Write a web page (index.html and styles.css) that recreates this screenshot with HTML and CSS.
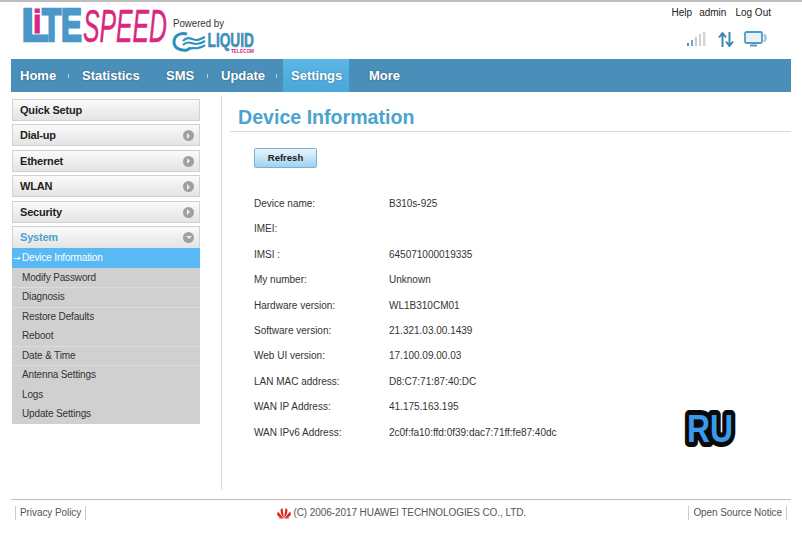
FILE: index.html
```html
<!DOCTYPE html>
<html lang="en">
<head>
<meta charset="utf-8">
<title>Device Information</title>
<link rel="stylesheet" href="styles.css">
</head>
<body>
<div class="page">
  <header class="header">
    <svg class="logo" width="245" height="55" viewBox="15 2 245 55">
      <text class="lg-blue" x="21.500" y="40.500" font-size="47" textLength="27" lengthAdjust="spacingAndGlyphs">L</text>
      <text class="lg-pink" x="33" y="33" font-size="33" textLength="8.500" lengthAdjust="spacingAndGlyphs">i</text>
      <text class="lg-blue" x="42" y="40.500" font-size="47" textLength="40" lengthAdjust="spacingAndGlyphs">TE</text>
      <text class="lg-speed" x="83" y="41.500" font-size="47" textLength="84" lengthAdjust="spacingAndGlyphs">SPEED</text>
      <text class="lg-by" x="173" y="26.500" font-size="10.500" textLength="51" lengthAdjust="spacingAndGlyphs">Powered by</text>
      <path class="lg-c" d="M187 34c-7-2-13 2-13 8s6 9 13 8l3-2"/>
      <path class="lg-w" d="M183 41c5-6 9-1 13-1s6-2 9-3M183 45c5-5 9-1 13-1s6-1 9-3M189 49c3-2 6 0 9-1s5-1 7-3"/>
      <text class="lg-liquid" x="207.500" y="47" font-size="21" textLength="46.500" lengthAdjust="spacingAndGlyphs">LIQUID</text>
      <text class="lg-tel" x="231" y="53" font-size="5.500" textLength="23" lengthAdjust="spacingAndGlyphs">TELECOM</text>
    </svg>
    <div class="top-right">
      <div class="links"><span>Help</span><span>admin</span><span>Log Out</span></div>
      <div class="status">
        <svg width="21" height="16" viewBox="0 0 21 16"><rect x="0" y="12" width="2" height="3" fill="#4a90b8"/><rect x="4" y="9" width="2" height="6" fill="#6fa6c6"/><rect x="8" y="6" width="2" height="9" fill="#c9c9c9"/><rect x="12" y="3" width="2" height="12" fill="#cfcfcf"/><rect x="16" y="1" width="2.500" height="14" fill="#d6d6d6"/></svg>
        <svg width="16" height="15" viewBox="0 0 16 15"><path d="M4.500 15V2M1 5.500 4.500 1 8 5.500M11.500 0v13M8 9.500l3.500 4.500 3.500-4.500" fill="none" stroke="#3f87b3" stroke-width="2"/></svg>
        <svg width="24" height="16" viewBox="0 0 24 16"><rect x="1" y="1" width="17" height="11" rx="1.500" fill="#e8f3f9" stroke="#4f9bc6" stroke-width="1.800"/><path d="M6 14.500h7" stroke="#4f9bc6" stroke-width="2"/><path d="M20 3.500c2 2 2 5 0 7" fill="none" stroke="#9cc6dd" stroke-width="2.500"/></svg>
      </div>
    </div>
  </header>

  <nav class="nav">
    <a class="nav-item w-home">Home</a><i class="sep"></i>
    <a class="nav-item w-stat">Statistics</a>
    <a class="nav-item w-sms">SMS</a><i class="sep"></i>
    <a class="nav-item w-upd">Update</a><i class="sep"></i>
    <a class="nav-item active">Settings</a>
    <a class="nav-item w-more">More</a>
  </nav>

  <div class="main">
    <aside class="side">
      <div class="menu">Quick Setup</div>
      <div class="menu">Dial-up<b class="arrow"></b></div>
      <div class="menu">Ethernet<b class="arrow"></b></div>
      <div class="menu">WLAN<b class="arrow"></b></div>
      <div class="menu">Security<b class="arrow"></b></div>
      <div class="menu open">System<b class="arrow down"></b></div>
      <ul class="sub">
        <li class="current"><span class="cur-arrow">→</span>Device Information</li>
        <li>Modify Password</li>
        <li class="rule">Diagnosis</li>
        <li class="rule">Restore Defaults</li>
        <li>Reboot</li>
        <li class="rule">Date &amp; Time</li>
        <li class="rule">Antenna Settings</li>
        <li>Logs</li>
        <li>Update Settings</li>
      </ul>
    </aside>
    <section class="content">
      <h1>Device Information</h1>
      <button class="refresh">Refresh</button>
      <dl class="info">
        <div><dt>Device name:</dt><dd>B310s-925</dd></div>
        <div><dt>IMEI:</dt><dd></dd></div>
        <div><dt>IMSI :</dt><dd>645071000019335</dd></div>
        <div><dt>My number:</dt><dd>Unknown</dd></div>
        <div><dt>Hardware version:</dt><dd>WL1B310CM01</dd></div>
        <div><dt>Software version:</dt><dd>21.321.03.00.1439</dd></div>
        <div><dt>Web UI version:</dt><dd>17.100.09.00.03</dd></div>
        <div><dt>LAN MAC address:</dt><dd>D8:C7:71:87:40:DC</dd></div>
        <div><dt>WAN IP Address:</dt><dd>41.175.163.195</dd></div>
        <div><dt>WAN IPv6 Address:</dt><dd>2c0f:fa10:ffd:0f39:dac7:71ff:fe87:40dc</dd></div>
      </dl>
      <svg class="ru" width="60" height="44" viewBox="0 0 60 44"><text x="7" y="32" font-size="38" textLength="46" lengthAdjust="spacingAndGlyphs">RU</text></svg>
    </section>
  </div>

  <footer class="footer">
    <span class="foot-link">Privacy Policy</span>
    <span class="copy">
      <svg width="14" height="12" viewBox="0 0 14 12"><path d="M7 11.500 5.500 1 3.500 2.500 4 7ZM7 11.500 8.500 1 10.500 2.500 10 7ZM6.500 11.500 1 4.500 0 7.500 2.500 10.500ZM7.500 11.500 13 4.500 14 7.500 11.500 10.500ZM6 11.500H1.500L3 12.500ZM8 11.500h4.500L11 12.500Z" fill="#d8261c"/></svg>
      (C) 2006-2017 HUAWEI TECHNOLOGIES CO., LTD.
    </span>
    <span class="foot-link">Open Source Notice</span>
  </footer>
</div>
</body>
</html>
```
FILE: styles.css
```css
* { box-sizing: border-box; }
html, body { margin: 0; padding: 0; background: #fff; }
body { font-family: "Liberation Sans", Arial, sans-serif; color: #222; overflow: hidden; }
.page { width: 802px; height: 548px; border-top: 2px solid #bdbdbd; }

.header { height: 57px; display: flex; justify-content: space-between; padding: 0 11px 0 15px; }
.logo { display: block; flex: none; }
.logo text { font-family: "Liberation Sans", sans-serif; }
.logo .lg-blue { font-weight: 700; fill: #4a97c9; stroke: #4a97c9; stroke-width: 2.500px; }
.logo .lg-pink { font-weight: 700; fill: #d8287f; stroke: #d8287f; stroke-width: 1px; }
.logo .lg-speed { font-style: italic; fill: #d8287f; stroke: #d8287f; stroke-width: .5px; }
.logo .lg-by { fill: #333; }
.logo .lg-liquid { font-weight: 700; fill: #3f8fb8; stroke: #3f8fb8; stroke-width: .6px; }
.logo .lg-tel { font-weight: 700; fill: #d8287f; }
.lg-c { fill: none; stroke: #2f8fbd; stroke-width: 3px; }
.lg-w { fill: none; stroke: #2f8fbd; stroke-width: 2.200px; }

.top-right { display: flex; flex-direction: column; align-items: flex-end; padding: 5px 20px 0 0; }
.links { display: flex; gap: 7px; font-size: 10px; line-height: 12px; color: #222; }
.links span:last-child { margin-left: 2px; }
.status { display: flex; align-items: center; gap: 10px; margin: 12px 3px 0 0; }

.nav { margin: 0 11px; height: 33px; background: #4a8fba; display: flex; align-items: stretch; }
.nav-item { font-weight: 700; font-size: 13px; line-height: 33px; color: #fff; text-shadow: 0 0 2px rgba(0,0,0,.35); }
.w-home { width: 55px; padding-left: 9px; }
.w-stat { width: 84px; padding-left: 13px; }
.w-sms { width: 52px; padding-left: 13px; }
.w-upd { width: 66px; padding-left: 13px; }
.nav-item.active { width: 66px; padding-left: 8px; background: linear-gradient(#5cb6e6, #4ba6d9); margin-left: 6px; }
.w-more { padding-left: 20px; }
.sep { width: 1px; height: 4px; margin: 15px 0 0 2px; background: rgba(255,255,255,.6); }

.main { display: flex; height: 407px; }
.side { width: 188px; margin: 7px 0 0 12px; flex: none; }
.menu { position: relative; height: 22px; margin-bottom: 3.400px; padding-left: 8px; border: 1px solid #d0d0d0; border-left-width: 0; border-right-width: 0; background: linear-gradient(#fafafa, #e4e4e4); box-shadow: inset 1px 0 #d4d4d4, inset -1px 0 #d4d4d4; font-weight: 700; font-size: 11px; letter-spacing: -.2px; line-height: 20px; color: #222; }
.menu.open { color: #4ba3cf; margin-bottom: 0; border-bottom: 0; }
.arrow { position: absolute; right: 6px; top: 5px; width: 11px; height: 11px; border-radius: 50%; background: #a0a0a0; }
.arrow::after { content: ""; position: absolute; left: 4px; top: 2.500px; border: 3px solid transparent; border-left: 3.500px solid #eee; border-right: 0; }
.arrow.down::after { left: 2.500px; top: 4px; border: 3px solid transparent; border-top: 3.500px solid #eee; border-bottom: 0; }
.sub { list-style: none; margin: 0; padding: 0; background: #d0d0d0; }
.sub li { height: 19.550px; padding-left: 10px; font-size: 10px; letter-spacing: -.15px; line-height: 20px; color: #333; }
.sub li.rule { box-shadow: inset 0 1px #dcdcdc; }
.sub li.current { padding-left: 1px; background: #58b9f4; color: #fff; line-height: 19px; }
.cur-arrow { display: inline-block; width: 9px; letter-spacing: 0; font-family: "DejaVu Sans", sans-serif; font-size: 9px; }

.content { position: relative; flex: 1; margin: 4px 11px 9px 21px; border-left: 1px solid #dcdcdc; }
h1 { margin: 0 0 0 8px; height: 36px; padding: 9px 0 0 8px; border-bottom: 1px solid #dcdcdc; font-size: 19.600px; line-height: 24px; font-weight: 700; color: #4ba3cf; }
.refresh { display: block; margin: 16px 0 0 32px; width: 63px; height: 20px; padding: 0 0 1px; border: 1px solid #7fb0cf; border-radius: 2px; background: linear-gradient(#e9f5fc, #9ed3f2); font-family: inherit; font-weight: 700; font-size: 9.500px; color: #222; }
.info { margin: 23px 0 0 32px; font-size: 10px; color: #333; }
.info div { display: flex; height: 25.400px; line-height: 25.400px; }
dt { width: 135px; }
dd { margin: 0; }
.ru { position: absolute; left: 458px; top: 314px; overflow: visible; }
.ru text { font-family: "Liberation Sans", sans-serif; font-weight: 700; fill: #3a9bec; stroke: #0a0a0a; stroke-width: 10px; stroke-linejoin: round; paint-order: stroke fill; }

.footer { margin: 0 11px; height: 29px; border-top: 1px solid #bdbdbd; padding: 6px 4px 0; display: flex; justify-content: space-between; align-items: flex-start; font-size: 10px; letter-spacing: -.08px; line-height: 14px; color: #555; }
.foot-link { padding: 0 4px; border: 1px solid #ccc; border-width: 0 1px; }
.copy { display: flex; align-items: center; gap: 2px; margin-left: 29px; }
```
